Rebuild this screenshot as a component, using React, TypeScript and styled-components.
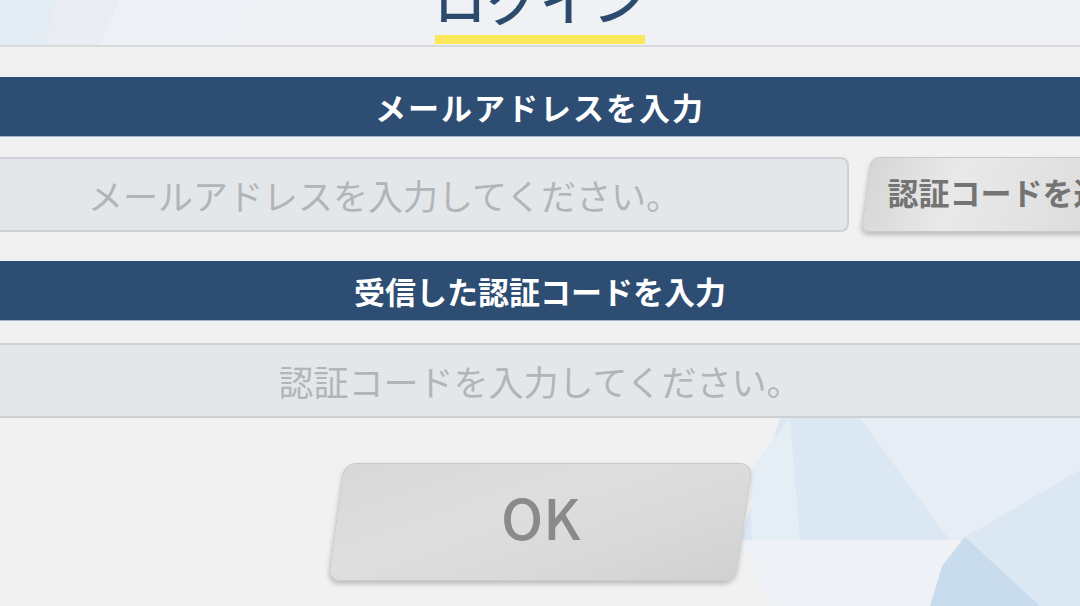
import styled, { createGlobalStyle } from 'styled-components';

const COLORS = {
  NAVY: '#2d4d72',
  TITLE: '#2c4a6e',
  PAGE: '#f1f1f1',
  FIELD: '#e4e7ea',
  FIELD_BORDER: '#cdd1d5',
  PLACEHOLDER: '#b2b5b8',
  BUTTON_TEXT: '#747474',
  YELLOW: '#fbe85a',
};

const FONT = `'Noto Sans CJK JP', 'Noto Sans', sans-serif`;

const GlobalStyle = createGlobalStyle`
  html, body {
    margin: 0;
    padding: 0;
    background: ${COLORS.PAGE};
  }

  * {
    box-sizing: border-box;
  }
`;

const Page = styled.div`
  position: relative;
  width: 1080px;
  height: 606px;
  overflow: hidden;
  background: ${COLORS.PAGE};
  font-family: ${FONT};
`;

const Backdrop = styled.svg`
  position: absolute;
  inset: 0;
  width: 100%;
  height: 100%;
  pointer-events: none;
`;

const Content = styled.div`
  position: relative;
  display: flex;
  flex-direction: column;
`;

const Header = styled.header`
  height: 47px;
  display: flex;
  justify-content: center;
  align-items: flex-end;
  border-bottom: 2px solid #d9dadc;
  background: rgba(240, 242, 246, 0.6);
  overflow: hidden;
`;

const TitleBlock = styled.div`
  display: flex;
  flex-direction: column;
  align-items: center;
  padding-bottom: 1px;
`;

const Title = styled.h1`
  margin: 0;
  font-size: 52px;
  line-height: 1;
  font-weight: 500;
  color: ${COLORS.TITLE};
  letter-spacing: 1px;
`;

const Underline = styled.div`
  width: 210px;
  height: 9px;
  margin-top: 10px;
  background: ${COLORS.YELLOW};
`;

const SectionBar = styled.div<{ $top: number; $spacing: number }>`
  margin-top: ${({ $top }) => $top}px;
  height: 60px;
  display: flex;
  align-items: center;
  justify-content: center;
  background: ${COLORS.NAVY};
  border-bottom: 1px solid #a8b6c8;
  color: #fff;
  font-size: 31px;
  font-weight: 700;
  letter-spacing: ${({ $spacing }) => $spacing}px;
`;

const FieldRow = styled.div<{ $top: number; $withButton?: boolean }>`
  margin: ${({ $top }) => $top}px -80px 0;
  display: grid;
  grid-template-columns: ${({ $withButton }) => ($withButton ? '929px 290px' : '1fr')};
  column-gap: 17px;
  height: 75px;
`;

const TextInput = styled.input`
  width: 100%;
  height: 100%;
  border: 2px solid ${COLORS.FIELD_BORDER};
  border-radius: 8px;
  background: ${COLORS.FIELD};
  text-align: center;
  font-family: ${FONT};
  font-size: 35px;
  color: #555;
  outline: none;

  &::placeholder {
    color: ${COLORS.PLACEHOLDER};
  }
`;

const SkewButton = styled.button<{ $size: 'small' | 'large' }>`
  height: 100%;
  border: 1px solid #c9c9c9;
  border-radius: ${({ $size }) => ($size === 'large' ? '12px' : '8px')};
  transform: skewX(-8deg);
  background: linear-gradient(100deg, #d6d6d6 0%, #e9e9e9 30%, #e2e2e2 60%, #d4d4d4 100%);
  box-shadow: 0 3px 5px rgba(0, 0, 0, 0.22);
  color: ${COLORS.BUTTON_TEXT};
  font-family: ${FONT};
  font-weight: 700;
  display: flex;
  align-items: center;
  padding: 0;
  cursor: pointer;

  & > span {
    display: block;
    transform: skewX(8deg);
  }
`;

const SendButton = styled(SkewButton)`
  justify-content: flex-start;
  padding: 0 0 6px 20px;
  font-size: 31px;
  white-space: nowrap;
`;

const OkButton = styled(SkewButton)`
  align-self: center;
  margin-top: 45px;
  width: 408px;
  height: 118px;
  justify-content: center;
  padding-bottom: 14px;
  font-size: 56px;
  font-weight: 500;
  color: #8a8a8a;
  background: linear-gradient(160deg, #d8d8d8 0%, #dedede 40%, #d9d9d9 70%, #d1d1d1 100%);
`;

function Triangles() {
  return (
    <Backdrop viewBox='0 0 1080 606' preserveAspectRatio='none'>
      <polygon points='0,0 75,0 50,46 0,46' fill='#cfe0ee' />
      <polygon points='55,0 120,0 100,46 45,46' fill='#dfe6ee' />
      <polygon points='120,0 260,0 230,46 100,46' fill='#e8edf3' />
      <polygon points='780,418 860,418 950,540 740,540' fill='#dbe8f3' />
      <polygon points='860,418 1080,418 1080,470 960,540 950,540' fill='#e6edf4' />
      <polygon points='960,540 1080,470 1080,606 1010,606' fill='#dbe7f3' />
      <polygon points='965,537 1040,606 910,606' fill='#c9dcee' />
      <polygon points='740,540 950,540 930,606 770,606' fill='#eef2f6' />
      <polygon points='750,470 790,418 800,540 752,540' fill='#e5edf5' />
    </Backdrop>
  );
}

function App() {
  return (
    <>
      <GlobalStyle />
      <Page>
        <Triangles />
        <Content>
          <Header>
            <TitleBlock>
              <Title>ログイン</Title>
              <Underline />
            </TitleBlock>
          </Header>

          <SectionBar $top={30} $spacing={2}>
            メールアドレスを入力
          </SectionBar>
          <FieldRow $top={20} $withButton>
            <TextInput placeholder='メールアドレスを入力してください。' />
            <SendButton $size='small'>
              <span>認証コードを送信</span>
            </SendButton>
          </FieldRow>

          <SectionBar $top={29} $spacing={0}>
            受信した認証コードを入力
          </SectionBar>
          <FieldRow $top={22}>
            <TextInput placeholder='認証コードを入力してください。' />
          </FieldRow>

          <OkButton $size='large'>
            <span>OK</span>
          </OkButton>
        </Content>
      </Page>
    </>
  );
}

export default App;
